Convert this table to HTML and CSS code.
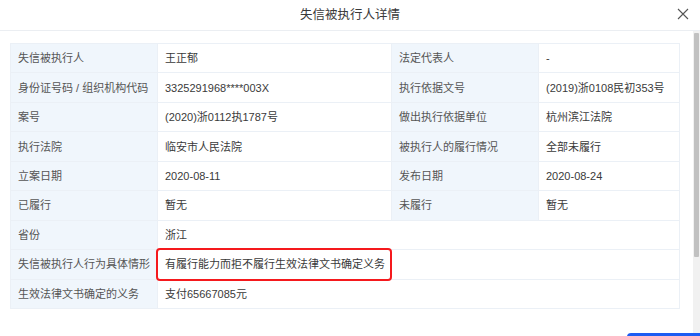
FILE: index.html
```html
<!DOCTYPE html>
<html lang="zh">
<head>
<meta charset="utf-8">
<link rel="stylesheet" href="styles.css">
</head>
<body>
<div class="dialog">
  <div class="header">
    <span class="title">失信被执行人详情</span>
    <span class="close">
      <svg width="12" height="12" viewBox="0 0 12 12"><path d="M1 1L11 11M11 1L1 11" stroke="#555" stroke-width="1.1" fill="none"/></svg>
    </span>
  </div>
  <div class="body">
    <div class="content">
      <table class="info">
        <colgroup>
          <col class="c1"><col class="c2"><col class="c3"><col class="c4">
        </colgroup>
        <tr><td class="lb">失信被执行人</td><td>王正郁</td><td class="lb">法定代表人</td><td>-</td></tr>
        <tr><td class="lb">身份证号码 / 组织机构代码</td><td>3325291968****003X</td><td class="lb">执行依据文号</td><td>(2019)浙0108民初353号</td></tr>
        <tr><td class="lb">案号</td><td>(2020)浙0112执1787号</td><td class="lb">做出执行依据单位</td><td>杭州滨江法院</td></tr>
        <tr><td class="lb">执行法院</td><td>临安市人民法院</td><td class="lb">被执行人的履行情况</td><td>全部未履行</td></tr>
        <tr><td class="lb">立案日期</td><td>2020-08-11</td><td class="lb">发布日期</td><td>2020-08-24</td></tr>
        <tr><td class="lb">已履行</td><td>暂无</td><td class="lb">未履行</td><td>暂无</td></tr>
        <tr><td class="lb">省份</td><td colspan="3">浙江</td></tr>
        <tr><td class="lb">失信被执行人行为具体情形</td><td colspan="3" class="marked">有履行能力而拒不履行生效法律文书确定义务<span class="highlight"></span></td></tr>
        <tr><td class="lb">生效法律文书确定的义务</td><td colspan="3">支付65667085元</td></tr>
      </table>
    </div>
    <div class="scrollbar"><div class="thumb"></div></div>
  </div>
  <div class="action"></div>
</div>
</body>
</html>
```

FILE: styles.css
```css
* { box-sizing: border-box; }
html, body {
  margin: 0;
  padding: 0;
  background: #fff;
}
body {
  font-family: "Liberation Sans", "Noto Sans CJK SC", sans-serif;
  color: #333;
  width: 700px;
  height: 336px;
  overflow: hidden;
}
.dialog {
  position: relative;
  width: 700px;
  height: 336px;
  display: flex;
  flex-direction: column;
  overflow: hidden;
}
.header {
  height: 31px;
  flex: none;
  border-bottom: 1px solid #ebeef2;
  display: flex;
  align-items: center;
  justify-content: center;
  position: relative;
}
.title {
  font-size: 12.5px;
  color: #3a3a3a;
  line-height: 1;
}
.close {
  position: absolute;
  right: 11px;
  top: 8px;
  width: 12px;
  height: 12px;
  display: flex;
}
.body {
  flex: 1;
  display: flex;
  min-height: 0;
  overflow: hidden;
}
.content {
  flex: 1;
  padding: 12px 14px 0 10px;
  overflow: hidden;
}
.info {
  border-collapse: collapse;
  width: 669px;
  table-layout: fixed;
  font-size: 11px;
}
.c1 { width: 147px; }
.c2 { width: 234px; }
.c3 { width: 147px; }
.c4 { width: 141px; }
.info td {
  border: 1px solid #ebf0f6;
  height: 29.44px;
  padding: 0 7px;
  white-space: nowrap;
  color: #3a3a3a;
  line-height: 16px;
}
.info td.lb {
  background: #f0f6fc;
  color: #555;
}
.info td.marked {
  position: relative;
}
.highlight {
  position: absolute;
  left: -2px;
  top: -2px;
  width: 236px;
  height: 33px;
  border: 2px solid #f5191d;
  border-radius: 4px;
}
.scrollbar {
  width: 7px;
  flex: none;
  background: #f1f1f1;
  padding: 2px 1px 0 1px;
}
.thumb {
  height: 224px;
  background: #c1c1c1;
  border-radius: 1px;
}
.action {
  position: absolute;
  left: 627px;
  top: 333px;
  width: 80px;
  height: 30px;
  background: #1d5cf2;
  border-radius: 4px;
}
```
